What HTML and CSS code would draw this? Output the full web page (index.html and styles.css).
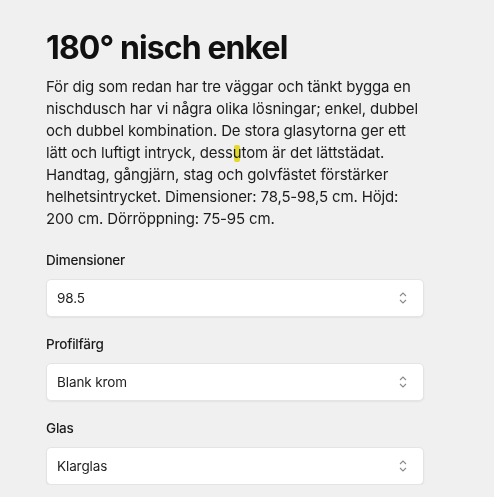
FILE: index.html
```html
<!DOCTYPE html>
<html lang="sv">
<head>
<meta charset="utf-8">
<link rel="stylesheet" href="styles.css">
</head>
<body>
<main class="product">
  <h1 class="title">180° nisch enkel</h1>
  <p class="desc">För dig som redan har tre väggar och tänkt bygga en nischdusch har vi några olika lösningar; enkel, dubbel och dubbel kombination. De stora glasytorna ger ett lätt och luftigt intryck, dess<span class="mark">u</span>tom är det lättstädat. Handtag, gångjärn, stag och golvfästet förstärker helhetsintrycket. Dimensioner: 78,5-98,5 cm. Höjd: 200 cm. Dörröppning: 75-95 cm.</p>

  <div class="field">
    <label class="label">Dimensioner</label>
    <div class="select"><span>98.5</span>
      <svg class="chev" width="10" height="14" viewBox="0 0 10 14"><path d="M2 5 L5 2 L8 5 M2 9 L5 12 L8 9" fill="none" stroke="#8a8a8a" stroke-width="1.1"/></svg>
    </div>
  </div>
  <div class="field">
    <label class="label">Profilfärg</label>
    <div class="select"><span>Blank krom</span>
      <svg class="chev" width="10" height="14" viewBox="0 0 10 14"><path d="M2 5 L5 2 L8 5 M2 9 L5 12 L8 9" fill="none" stroke="#8a8a8a" stroke-width="1.1"/></svg>
    </div>
  </div>
  <div class="field">
    <label class="label">Glas</label>
    <div class="select"><span>Klarglas</span>
      <svg class="chev" width="10" height="14" viewBox="0 0 10 14"><path d="M2 5 L5 2 L8 5 M2 9 L5 12 L8 9" fill="none" stroke="#8a8a8a" stroke-width="1.1"/></svg>
    </div>
  </div>
</main>
</body>
</html>
```
FILE: styles.css
```css
html, body {
  margin: 0;
}
body {
  background: #f0f0f0;
  font-family: Inter, "Liberation Sans", sans-serif;
  color: #1a1a1a;
}
.product {
  width: 378px;
  padding: 26px 0 0 46px;
}
.title {
  margin: 0;
  font-size: 32px;
  font-weight: 700;
  line-height: 44px;
  letter-spacing: -0.9px;
  color: #111;
}
.desc {
  margin: 6px -4px 0 0;
  font-size: 15px;
  line-height: 22px;
  letter-spacing: -0.15px;
  color: #1c1c1c;
}
.mark {
  position: relative;
}
.mark::before {
  content: "";
  position: absolute;
  left: 1px;
  top: 2px;
  width: 6px;
  height: 17px;
  background: #f2e830;
  border-radius: 2px;
  mix-blend-mode: multiply;
}
.field {
  margin-top: 21px;
  display: flex;
  flex-direction: column;
  gap: 10px;
}
.field + .field {
  margin-top: 18px;
}
.label {
  font-size: 13.5px;
  line-height: 18px;
  font-weight: 500;
  letter-spacing: -0.2px;
  color: #1a1a1a;
}
.select {
  height: 38px;
  box-sizing: border-box;
  background: #fff;
  border: 1px solid #e4e4e4;
  border-radius: 5px;
  box-shadow: 0 1px 2px rgba(0,0,0,0.06);
  display: flex;
  align-items: center;
  justify-content: space-between;
  padding: 0 15px 0 10px;
  font-size: 13.5px;
  letter-spacing: -0.1px;
  color: #222;
}
.chev {
  display: block;
}
```
